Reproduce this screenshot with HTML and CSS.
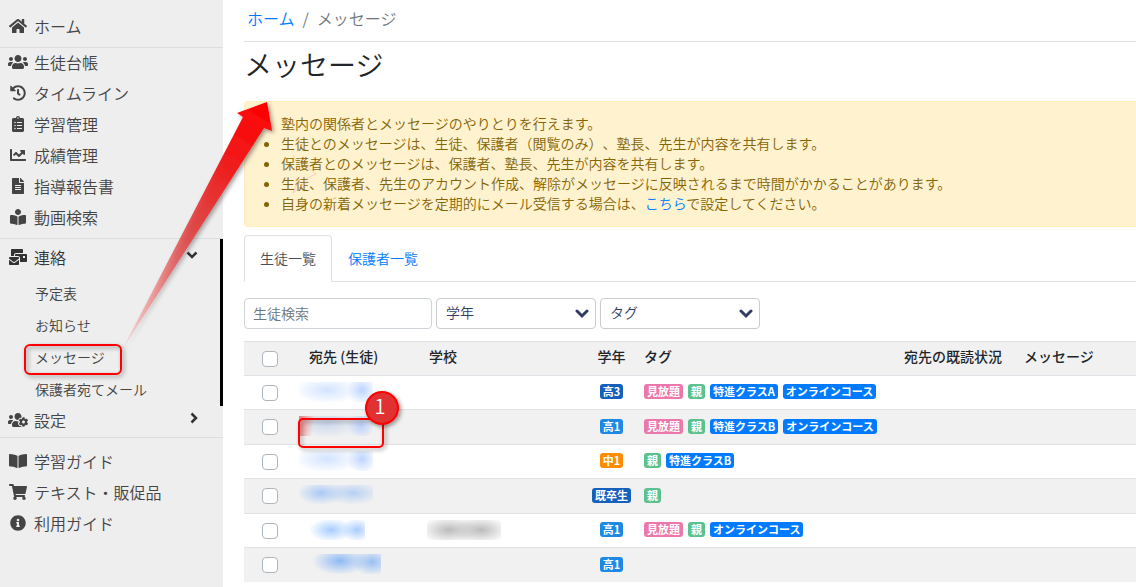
FILE: index.html
```html
<!DOCTYPE html>
<html lang="ja">
<head>
<meta charset="utf-8">
<meta name="viewport" content="width=device-width, initial-scale=1">
<title>メッセージ</title>
<link rel="stylesheet" href="styles.css">
</head>
<body>
<div class="app">
  <nav class="sidebar">
    <ul class="section section-home">
      <li><a class="item" href="#"><svg class="icon" viewBox="0 0 576 512"><path d="M280.37 148.26L96 300.11V464a16 16 0 0 0 16 16l112.06-.29a16 16 0 0 0 15.92-16V368a16 16 0 0 1 16-16h64a16 16 0 0 1 16 16v95.64a16 16 0 0 0 16 16.05L464 480a16 16 0 0 0 16-16V300L295.67 148.26a12.19 12.19 0 0 0-15.3 0zM571.6 251.47L488 182.56V44.05a12 12 0 0 0-12-12h-56a12 12 0 0 0-12 12v72.61L318.47 43a48 48 0 0 0-61 0L4.34 251.47a12 12 0 0 0-1.6 16.9l25.5 31A12 12 0 0 0 45.15 301l235.22-193.74a12.19 12.19 0 0 1 15.3 0L530.9 301a12 12 0 0 0 16.9-1.6l25.5-31a12 12 0 0 0-1.7-16.93z"/></svg>ホーム</a></li>
    </ul>
    <ul class="section section-main">
      <li><a class="item" href="#"><svg class="icon" viewBox="0 0 640 512"><path d="M96 224c35.3 0 64-28.7 64-64s-28.7-64-64-64-64 28.7-64 64 28.7 64 64 64zm448 0c35.3 0 64-28.7 64-64s-28.7-64-64-64-64 28.7-64 64 28.7 64 64 64zm32 32h-64c-17.6 0-33.5 7.1-45.1 18.6 40.3 22.1 68.9 62 75.1 109.4h66c17.7 0 32-14.3 32-32v-32c0-35.3-28.7-64-64-64zm-256 0c61.9 0 112-50.1 112-112S381.9 32 320 32 208 82.1 208 144s50.1 112 112 112zm76.8 32h-8.3c-20.8 10-43.9 16-68.5 16s-47.6-6-68.5-16h-8.3C179.6 288 128 339.6 128 403.2V432c0 26.5 21.5 48 48 48h288c26.5 0 48-21.5 48-48v-28.8c0-63.6-51.6-115.2-115.2-115.2zm-223.7-13.4C161.5 263.1 145.6 256 128 256H64c-35.3 0-64 28.7-64 64v32c0 17.7 14.3 32 32 32h65.9c6.3-47.4 34.9-87.3 75.2-109.4z"/></svg>生徒台帳</a></li>
      <li><a class="item" href="#"><svg class="icon" viewBox="0 0 512 512"><path d="M504 255.531c.253 136.64-111.18 248.372-247.82 248.468-59.015.042-113.223-20.53-155.822-54.911-11.077-8.94-11.905-25.541-1.839-35.607l11.267-11.267c8.609-8.609 22.353-9.551 31.891-1.984C173.062 425.135 212.781 440 256 440c101.705 0 184-82.311 184-184 0-101.705-82.311-184-184-184-48.814 0-93.149 18.969-126.068 49.932l50.754 50.754c10.08 10.08 2.941 27.314-11.313 27.314H24c-8.837 0-16-7.163-16-16V38.627c0-14.254 17.234-21.393 27.314-11.314l49.372 49.372C129.209 34.136 189.552 8 256 8c136.81 0 247.747 110.78 248 247.531zm-180.912 78.784l9.823-12.63c8.138-10.463 6.253-25.542-4.21-33.679L288 256.349V152c0-13.255-10.745-24-24-24h-16c-13.255 0-24 10.745-24 24v135.651l65.409 50.874c10.463 8.137 25.541 6.253 33.679-4.21z"/></svg>タイムライン</a></li>
      <li><a class="item" href="#"><svg class="icon" viewBox="0 0 384 512"><path d="M336 64h-80c0-35.3-28.7-64-64-64s-64 28.7-64 64H48C21.5 64 0 85.5 0 112v352c0 26.5 21.5 48 48 48h288c26.5 0 48-21.5 48-48V112c0-26.5-21.5-48-48-48zM96 424c-13.3 0-24-10.7-24-24s10.7-24 24-24 24 10.7 24 24-10.7 24-24 24zm0-96c-13.3 0-24-10.7-24-24s10.7-24 24-24 24 10.7 24 24-10.7 24-24 24zm0-96c-13.3 0-24-10.7-24-24s10.7-24 24-24 24 10.7 24 24-10.7 24-24 24zm96-192c13.3 0 24 10.7 24 24s-10.7 24-24 24-24-10.7-24-24 10.7-24 24-24zm128 368c0 4.4-3.6 8-8 8H168c-4.4 0-8-3.6-8-8v-16c0-4.4 3.6-8 8-8h144c4.4 0 8 3.6 8 8v16zm0-96c0 4.4-3.6 8-8 8H168c-4.4 0-8-3.6-8-8v-16c0-4.4 3.6-8 8-8h144c4.4 0 8 3.6 8 8v16zm0-96c0 4.4-3.6 8-8 8H168c-4.4 0-8-3.6-8-8v-16c0-4.4 3.6-8 8-8h144c4.4 0 8 3.6 8 8v16z"/></svg>学習管理</a></li>
      <li><a class="item" href="#"><svg class="icon" viewBox="0 0 512 512"><path d="M496 384H64V80c0-8.84-7.16-16-16-16H16C7.16 64 0 71.16 0 80v336c0 17.67 14.33 32 32 32h464c8.84 0 16-7.16 16-16v-32c0-8.84-7.16-16-16-16zM464 96H345.94c-21.38 0-32.09 25.85-16.97 40.97l32.4 32.4L288 242.75l-73.37-73.37c-12.5-12.5-32.76-12.5-45.25 0l-68.69 68.69c-6.25 6.25-6.25 16.38 0 22.63l22.62 22.62c6.25 6.25 16.38 6.25 22.63 0L192 237.25l73.37 73.37c12.5 12.5 32.76 12.5 45.25 0l96-96 32.4 32.4c15.12 15.12 40.97 4.41 40.97-16.97V112c.01-8.84-7.15-16-15.99-16z"/></svg>成績管理</a></li>
      <li><a class="item" href="#"><svg class="icon" viewBox="0 0 384 512"><path d="M224 136V0H24C10.7 0 0 10.7 0 24v464c0 13.3 10.7 24 24 24h336c13.3 0 24-10.7 24-24V160H248c-13.2 0-24-10.8-24-24zm64 236c0 6.6-5.4 12-12 12H108c-6.6 0-12-5.4-12-12v-8c0-6.6 5.4-12 12-12h168c6.6 0 12 5.4 12 12v8zm0-64c0 6.6-5.4 12-12 12H108c-6.6 0-12-5.4-12-12v-8c0-6.6 5.4-12 12-12h168c6.6 0 12 5.4 12 12v8zm0-72v8c0 6.6-5.4 12-12 12H108c-6.6 0-12-5.4-12-12v-8c0-6.6 5.4-12 12-12h168c6.6 0 12 5.4 12 12zm96-114.1v6.1H256V0h6.1c6.4 0 12.5 2.5 17 7l97.9 98c4.5 4.5 7 10.6 7 16.9z"/></svg>指導報告書</a></li>
      <li><a class="item" href="#"><svg class="icon" viewBox="0 0 512 512"><path d="M352 96c0-53.02-42.98-96-96-96s-96 42.98-96 96 42.98 96 96 96 96-42.98 96-96zM233.59 241.1c-59.33-36.32-155.43-46.3-203.79-49.05C13.55 191.13 0 203.51 0 219.14v222.8c0 14.33 11.59 26.28 26.49 27.05 43.66 2.29 131.99 10.68 193.04 41.43 9.37 4.72 20.48-1.71 20.48-11.87V252.56c-.01-4.67-2.32-8.95-6.42-11.46zm248.61-49.05c-48.35 2.74-144.46 12.73-203.78 49.05-4.1 2.51-6.41 6.96-6.41 11.63v245.79c0 10.19 11.14 16.63 20.54 11.9 61.04-30.72 149.32-39.11 192.97-41.4 14.9-.78 26.49-12.73 26.49-27.06V219.14c-.01-15.63-13.56-28.01-29.81-27.09z"/></svg>動画検索</a></li>
    </ul>
    <ul class="section section-group">
      <li class="group">
        <a class="item item-dark" href="#"><svg class="icon" viewBox="0 0 576 512"><path d="M160 448c-25.6 0-51.2-22.4-64-32-64-44.8-83.2-60.8-96-70.4V480c0 17.67 14.33 32 32 32h256c17.67 0 32-14.33 32-32V345.6c-12.8 9.6-32 25.6-96 70.4-12.8 9.6-38.4 32-64 32zm128-192H32c-17.67 0-32 14.33-32 32v16c25.6 19.2 22.4 19.2 115.2 86.4 9.6 6.4 28.8 25.6 44.8 25.6s35.2-19.2 44.8-22.4c92.8-67.2 89.6-67.2 115.2-86.4V288c0-17.67-14.33-32-32-32zm256-96H224c-17.67 0-32 14.33-32 32v32h96c33.21 0 60.59 25.42 63.71 57.82l.29-.22V416h192c17.67 0 32-14.33 32-32V192c0-17.67-14.33-32-32-32zm-32 128h-64v-64h64v64zm-352-96c0-35.29 28.71-64 64-64h224V32c0-17.67-14.33-32-32-32H96C78.33 0 64 14.33 64 32v192h96v-32z"/></svg><span class="label">連絡</span><svg class="caret" viewBox="0 0 12 12"><path d="M1.500 3.500L6 8l4.500-4.500"/></svg></a>
        <ul class="sub">
          <li><a class="subitem" href="#">予定表</a></li>
          <li><a class="subitem" href="#">お知らせ</a></li>
          <li><a class="subitem" href="#">メッセージ</a></li>
          <li><a class="subitem" href="#">保護者宛てメール</a></li>
        </ul>
      </li>
      <li><a class="item item-closed" href="#"><svg class="icon" viewBox="0 0 640 512"><path d="M610.5 341.3c2.6-14.1 2.6-28.5 0-42.6l25.8-14.9c3-1.7 4.3-5.2 3.3-8.5-6.7-21.6-18.2-41.2-33.2-57.4-2.3-2.5-6-3.1-9-1.4l-25.8 14.9c-10.9-9.3-23.4-16.5-36.9-21.3v-29.8c0-3.4-2.4-6.4-5.7-7.1-22.3-5-45-4.8-66.2 0-3.3.7-5.7 3.7-5.7 7.1v29.8c-13.5 4.8-26 12-36.9 21.3l-25.8-14.9c-2.9-1.7-6.7-1.1-9 1.4-15 16.2-26.5 35.8-33.2 57.4-1 3.3.4 6.8 3.3 8.5l25.8 14.9c-2.6 14.1-2.6 28.5 0 42.6l-25.8 14.9c-3 1.7-4.3 5.2-3.3 8.5 6.7 21.6 18.2 41.1 33.2 57.4 2.3 2.5 6 3.1 9 1.4l25.8-14.9c10.9 9.3 23.4 16.5 36.9 21.3v29.8c0 3.4 2.4 6.4 5.7 7.1 22.3 5 45 4.8 66.2 0 3.3-.7 5.7-3.7 5.7-7.1v-29.8c13.5-4.8 26-12 36.9-21.3l25.8 14.9c2.9 1.7 6.7 1.1 9-1.4 15-16.2 26.5-35.8 33.2-57.4 1-3.3-.4-6.8-3.3-8.5l-25.8-14.9zM496 368.5c-26.8 0-48.5-21.8-48.5-48.5s21.8-48.5 48.5-48.5 48.5 21.8 48.5 48.5-21.7 48.5-48.5 48.5zM96 224c35.3 0 64-28.7 64-64s-28.7-64-64-64-64 28.7-64 64 28.7 64 64 64zm224 32c1.9 0 3.7-.5 5.6-.6 8.3-21.7 20.5-42.1 36.3-59.2 7.4-8 17.9-12.6 28.9-12.6 6.9 0 13.7 1.8 19.6 5.3l7.9 4.6c.8-.5 1.6-.9 2.4-1.4 7-14.6 11.2-30.8 11.2-48 0-61.9-50.1-112-112-112S208 82.1 208 144c0 61.9 50.1 112 112 112zm105.2 194.5c-2.3-1.2-4.6-2.6-6.8-3.9-8.2 4.8-15.3 9.8-27.5 9.8-10.9 0-21.4-4.6-28.9-12.6-18.3-19.8-32.3-43.9-40.2-69.6-10.7-34.5 24.9-49.7 25.8-50.3-.1-2.6-.1-5.2 0-7.8l-7.9-4.6c-3.8-2.2-7-5-9.8-8.1-3.3.2-6.5.6-9.8.6-24.6 0-47.6-6-68.5-16h-8.3C179.6 288 128 339.6 128 403.2V432c0 26.5 21.5 48 48 48h255.4c-3.7-6-6.2-12.8-6.2-20.3v-9.2zM173.1 274.6C161.5 263.1 145.6 256 128 256H64c-35.3 0-64 28.7-64 64v32c0 17.7 14.3 32 32 32h65.9c6.3-47.4 34.9-87.3 75.2-109.4z"/></svg><span class="label">設定</span><svg class="caret" viewBox="0 0 12 12"><path d="M3.500 1.500L8 6l-4.500 4.500"/></svg></a></li>
    </ul>
    <ul class="section section-guide">
      <li><a class="item" href="#"><svg class="icon" viewBox="0 0 576 512"><path d="M542.22 32.05c-54.8 3.11-163.72 14.43-230.96 55.59-4.64 2.84-7.27 7.89-7.27 13.17v363.87c0 11.55 12.63 18.85 23.28 13.49 69.18-34.82 169.23-44.32 218.7-46.92 16.89-.89 30.02-14.43 30.02-30.66V62.75c.01-17.71-15.35-31.74-33.77-30.7zM264.73 87.64C197.5 46.48 88.58 35.17 33.78 32.05 15.36 31.01 0 45.04 0 62.75V400.6c0 16.24 13.13 29.78 30.02 30.66 49.49 2.6 149.59 12.11 218.77 46.95 10.62 5.35 23.21-1.94 23.21-13.46V100.63c0-5.29-2.62-10.14-7.27-12.99z"/></svg>学習ガイド</a></li>
      <li><a class="item" href="#"><svg class="icon" viewBox="0 0 576 512"><path d="M528.12 301.319l47.273-208C578.806 78.301 567.391 64 551.99 64H159.208l-9.166-44.81C147.758 8.021 137.93 0 126.529 0H24C10.745 0 0 10.745 0 24v16c0 13.255 10.745 24 24 24h69.883l70.248 343.435C147.325 417.1 136 435.222 136 456c0 30.928 25.072 56 56 56s56-25.072 56-56c0-15.674-6.447-29.835-16.824-40h209.647C430.447 426.165 424 440.326 424 456c0 30.928 25.072 56 56 56s56-25.072 56-56c0-22.172-12.888-41.332-31.579-50.405l5.517-24.276c3.413-15.018-8.002-29.319-23.403-29.319H218.117l-6.545-32h293.145c11.206 0 20.92-7.754 23.403-18.681z"/></svg>テキスト・販促品</a></li>
      <li><a class="item" href="#"><svg class="icon" viewBox="0 0 512 512"><path d="M256 8C119.043 8 8 119.083 8 256c0 136.997 111.043 248 248 248s248-111.003 248-248C504 119.083 392.957 8 256 8zm0 110c23.196 0 42 18.804 42 42s-18.804 42-42 42-42-18.804-42-42 18.804-42 42-42zm56 254c0 6.627-5.373 12-12 12h-88c-6.627 0-12-5.373-12-12v-24c0-6.627 5.373-12 12-12h12v-64h-12c-6.627 0-12-5.373-12-12v-24c0-6.627 5.373-12 12-12h64c6.627 0 12 5.373 12 12v100h12c6.627 0 12 5.373 12 12v24z"/></svg>利用ガイド</a></li>
    </ul>
  </nav>

  <main class="content">
    <nav class="breadcrumb"><a href="#">ホーム</a><span class="slash">/</span><span>メッセージ</span></nav>
    <h1 class="title">メッセージ</h1>
    <ul class="notice">
      <li>塾内の関係者とメッセージのやりとりを行えます。</li>
      <li>生徒とのメッセージは、生徒、保護者（閲覧のみ）、塾長、先生が内容を共有します。</li>
      <li>保護者とのメッセージは、保護者、塾長、先生が内容を共有します。</li>
      <li>生徒、保護者、先生のアカウント作成、解除がメッセージに反映されるまで時間がかかることがあります。</li>
      <li>自身の新着メッセージを定期的にメール受信する場合は、<a href="#">こちら</a>で設定してください。</li>
    </ul>
    <div class="tabs">
      <a class="tab tab-active" href="#">生徒一覧</a>
      <a class="tab" href="#">保護者一覧</a>
    </div>
    <form class="filters">
      <input class="field search" type="text" placeholder="生徒検索" aria-label="生徒検索">
      <span class="picker"><select class="field select" aria-label="学年"><option>学年</option></select><svg class="arrow" viewBox="0 0 14 10"><path d="M2 2l5 5 5-5"/></svg></span>
      <span class="picker"><select class="field select" aria-label="タグ"><option>タグ</option></select><svg class="arrow" viewBox="0 0 14 10"><path d="M2 2l5 5 5-5"/></svg></span>
    </form>
    <table class="students">
      <colgroup><col class="c-check"><col class="c-name"><col class="c-school"><col class="c-grade"><col class="c-tags"><col class="c-read"><col></colgroup>
      <thead>
        <tr><th class="check"><input type="checkbox" aria-label="すべて選択"></th><th>宛先 (生徒)</th><th>学校</th><th class="grade">学年</th><th>タグ</th><th>宛先の既読状況</th><th>メッセージ</th></tr>
      </thead>
      <tbody>
        <tr><td class="check"><input type="checkbox" aria-label="選択 1"></td><td><span class="masked soft"></span></td><td></td><td class="grade"><div class="tags"><span class="badge navy">高3</span></div></td><td><div class="tags"><span class="badge pink">見放題</span><span class="badge green">親</span><span class="badge blue">特進クラスA</span><span class="badge blue">オンラインコース</span></div></td><td></td><td></td></tr>
        <tr><td class="check"><input type="checkbox" aria-label="選択 2"></td><td><span class="masked marked"></span></td><td></td><td class="grade"><div class="tags"><span class="badge sky">高1</span></div></td><td><div class="tags"><span class="badge pink">見放題</span><span class="badge green">親</span><span class="badge blue">特進クラスB</span><span class="badge blue">オンラインコース</span></div></td><td></td><td></td></tr>
        <tr><td class="check"><input type="checkbox" aria-label="選択 3"></td><td><span class="masked soft"></span></td><td></td><td class="grade"><div class="tags"><span class="badge orange">中1</span></div></td><td><div class="tags"><span class="badge green">親</span><span class="badge blue">特進クラスB</span></div></td><td></td><td></td></tr>
        <tr><td class="check"><input type="checkbox" aria-label="選択 4"></td><td><span class="masked even"></span></td><td></td><td class="grade"><div class="tags"><span class="badge navy">既卒生</span></div></td><td><div class="tags"><span class="badge green">親</span></div></td><td></td><td></td></tr>
        <tr><td class="check"><input type="checkbox" aria-label="選択 5"></td><td><span class="masked short"></span></td><td><span class="masked gray"></span></td><td class="grade"><div class="tags"><span class="badge sky">高1</span></div></td><td><div class="tags"><span class="badge pink">見放題</span><span class="badge green">親</span><span class="badge blue">オンラインコース</span></div></td><td></td><td></td></tr>
        <tr><td class="check"><input type="checkbox" aria-label="選択 6"></td><td><span class="masked strong"></span></td><td></td><td class="grade"><div class="tags"><span class="badge sky">高1</span></div></td><td></td><td></td><td></td></tr>
      </tbody>
    </table>
  </main>

  <svg class="callouts" width="460" height="470" viewBox="0 0 460 470">
    <defs>
      <linearGradient id="fade" gradientUnits="userSpaceOnUse" x1="122" y1="350" x2="267" y2="102">
        <stop offset="0" stop-color="#f44" stop-opacity=".1"/>
        <stop offset=".45" stop-color="#e03030" stop-opacity=".75"/>
        <stop offset=".75" stop-color="#f01c1c"/>
        <stop offset="1" stop-color="#f00"/>
      </linearGradient>
      <filter id="shade" x="-20%" y="-20%" width="150%" height="150%"><feDropShadow dx="2" dy="2" stdDeviation="2" flood-color="#000" flood-opacity=".4"/></filter>
    </defs>
    <path d="M293 155l4 7M305 165l11 9-10 5M307 181l-14 12 5-12" fill="none" stroke="#f99" stroke-opacity=".4"/>
    <path d="M122 350L243 117l-6-4 30-11 5 29-8-3z" fill="url(#fade)" filter="url(#shade)"/>
    <rect x="25" y="345" width="96" height="29" rx="5" class="outline" filter="url(#shade)"/>
    <rect x="299" y="419" width="84" height="28" rx="4" class="outline" filter="url(#shade)"/>
    <circle cx="382" cy="408" r="16" class="dot" filter="url(#shade)"/>
    <text x="380" y="414" class="digit">1</text>
  </svg>
</div>
</body>
</html>
```
FILE: styles.css
```css
* { box-sizing: border-box; }

body {
  margin: 0;
  background: #fff;
  color: #212529;
  font-family: "Noto Sans CJK JP", sans-serif;
  font-size: 14px;
  font-weight: 350;
  line-height: 20px;
  text-spacing-trim: space-all;
}

ul { margin: 0; padding: 0; list-style: none; }
a { color: #007bff; text-decoration: none; }

.app { position: relative; display: flex; min-height: 100vh; }

/* Sidebar */
.sidebar { flex: 0 0 223px; background: #eee; }
.section { border-bottom: 1px solid #dcdde0; }
.section-home { padding: 12px 0 4px; }
.section-main { padding-bottom: 4px; }
.section-guide { padding-top: 9px; border-bottom: 0; }
.group { padding-top: 4px; border-right: 3px solid #000; }

.item {
  display: flex;
  align-items: center;
  gap: 6px;
  height: 31px;
  padding: 0 22px 3px 8px;
  color: #444;
  font-size: 16px;
}
.item-dark { color: #333; }
.item-closed { padding-right: 23px; }
.icon { width: 20px; height: 16px; fill: #444; }
.item-dark .icon { fill: #333; }
.label { flex: 1; }
.caret { width: 12px; height: 12px; margin-bottom: 5px; fill: none; stroke: #333; stroke-width: 2.5; }

.sub { padding-top: 4px; }
.subitem { display: block; padding: 5px 0 7px 35px; color: #444; }

/* Main column */
.content { flex: 1; min-width: 0; padding-left: 21px; }

.breadcrumb {
  display: flex;
  gap: 8px;
  padding: 6px 3px 11px;
  border-bottom: 1px solid #dee2e6;
  color: #6c757d;
  font-size: 16px;
  line-height: 24px;
}
.title { margin: 5px 0 20px; font-size: 28px; font-weight: 350; line-height: 34px; }

.notice {
  padding: 11px 12px 13px 36px;
  border: 1px solid #ffeeba;
  border-right: 0;
  border-radius: 4px 0 0 4px;
  background: #fff2cf;
  color: #856404;
  list-style: disc;
}

.tabs { display: flex; margin-top: 8px; border-bottom: 1px solid #dee2e6; }
.tab { padding: 13px 16px; }
.tab-active {
  margin-bottom: -1px;
  padding: 12px 15px 13px;
  border: 1px solid #dee2e6;
  border-bottom-color: #fff;
  border-radius: 4px 4px 0 0;
  background: #fff;
  color: #495057;
}

.filters { display: flex; gap: 4px; padding: 16px 0 12px; }
.field {
  height: 31px;
  border: 1px solid #ccc;
  border-radius: 4px;
  background: #fff;
  font: inherit;
}
.search { width: 188px; padding: 0 8px 2px; border-color: #ced4da; }
.search::placeholder { color: #6c757d; opacity: 1; }
.picker { position: relative; width: 160px; }
.select { width: 100%; padding: 0 24px 4px 9px; color: #333c63; appearance: none; }
.arrow {
  position: absolute;
  top: 11px;
  right: 7px;
  width: 14px;
  height: 10px;
  fill: none;
  stroke: #333c63;
  stroke-width: 3;
  stroke-linecap: round;
  pointer-events: none;
}

/* Student table */
.students { width: 100%; border-collapse: separate; border-spacing: 0; table-layout: fixed; }
.c-check { width: 53px; }
.c-name { width: 120px; }
.c-school { width: 174px; }
.c-grade { width: 41px; }
.c-tags { width: 260px; }
.c-read { width: 120px; }
.students th {
  height: 35px;
  padding: 0 12px 6px;
  border-top: 1px solid #dee2e6;
  background: #f1f1f1;
  font-weight: 500;
  text-align: left;
  white-space: nowrap;
}
.students td { height: 34px; padding: 0 12px 2px; border-top: 1px solid #dee2e6; }
.students tbody tr:nth-child(even) td { height: 35px; background: #f1f1f1; }
.students .grade { padding-right: 0; padding-left: 0; text-align: center; }
.students .check { padding: 0 0 0 18px; }
.students thead tr > * { border-bottom: 1px solid #dee2e6; }
.students tbody tr:first-child td { border-top: 0; height: 33px; }
.check input {
  display: block;
  width: 16px;
  height: 16px;
  margin: 0;
  border: 1px solid #adb5bd;
  border-radius: 4px;
  background: #fff;
  appearance: none;
}

.tags { display: flex; gap: 5px; }
.grade .tags { justify-content: center; }
.badge {
  padding: 0 3px;
  border-radius: 3px;
  color: #fff;
  font-size: 11px;
  font-weight: 700;
  line-height: 15px;
  white-space: nowrap;
}
.navy { background: #1560bd; }
.sky { background: #1e88e5; }
.orange { background: #ff8c00; }
.pink { background: #ec77ab; }
.green { background: #5bc28f; }
.blue { background: #007bff; }

/* Names and schools that are blurred out */
.masked { display: block; width: 74px; height: 20px; margin-left: -10px; }
.soft { background: radial-gradient(circle at 63px 8px, #bcd4ff, transparent 15px), radial-gradient(ellipse 34px 14px at 28px 8px, #d3e4ff, transparent); }
.marked { background: linear-gradient(100deg, #e88 2px, transparent 16px), radial-gradient(circle at 62px 9px, #b8cffa, transparent 14px), radial-gradient(ellipse 34px 14px at 28px 8px, #ccd9ee, transparent); }
.even { background: radial-gradient(ellipse 24px 12px at 22px 8px, #a9c8f5, transparent), radial-gradient(ellipse 28px 12px at 54px 8px, #b8d0f3, transparent); }
.short { width: 66px; background: radial-gradient(ellipse 22px 12px at 32px 10px, #a5cdff, transparent), radial-gradient(ellipse 16px 12px at 58px 10px, #a8cbff, transparent); }
.strong { width: 82px; background: radial-gradient(ellipse 28px 14px at 41px 7px, #8fbaf5, transparent), radial-gradient(ellipse 20px 14px at 73px 8px, #98bff4, transparent); }
.gray { margin-left: -2px; background: radial-gradient(ellipse 30px 14px at 22px 10px, #bbb, transparent), radial-gradient(ellipse 28px 14px at 54px 10px, #bbb, transparent); }

/* Callouts drawn over the page */
.callouts { position: absolute; top: 0; left: 0; pointer-events: none; }
.outline { fill: none; stroke: #f00; stroke-width: 2; }
.dot { fill: #e03030; stroke: #f00; stroke-width: 2; }
.digit { fill: #fff; font-size: 20px; text-anchor: middle; }
```
